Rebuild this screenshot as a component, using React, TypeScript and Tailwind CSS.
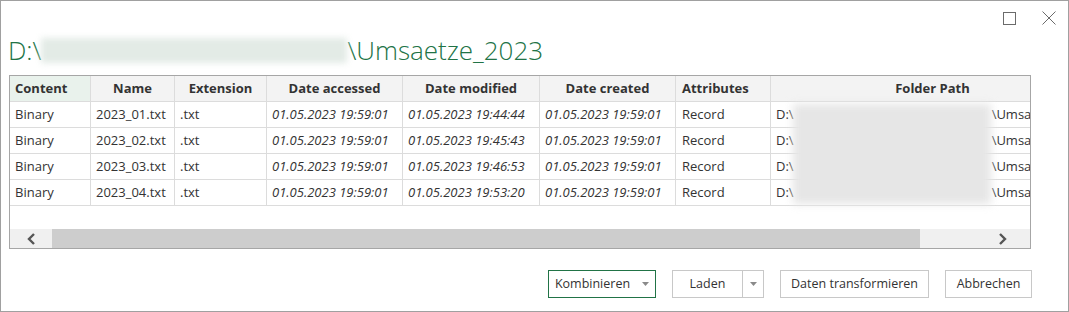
const rows = [
  { name: "2023_01.txt", modified: "01.05.2023 19:44:44" },
  { name: "2023_02.txt", modified: "01.05.2023 19:45:43" },
  { name: "2023_03.txt", modified: "01.05.2023 19:46:53" },
  { name: "2023_04.txt", modified: "01.05.2023 19:53:20" },
];

const cols = "grid grid-cols-[81px_84px_92px_136px_137px_136px_95px_1fr]";
const cell = "h-[26px] flex items-center border-r border-b border-[#dcdcdc] px-[5px] whitespace-nowrap overflow-hidden";
const head = "h-[26px] flex items-center justify-center border-r border-b border-[#dcdcdc] bg-[#f3f3f3] font-bold whitespace-nowrap";

const Caret = () => (
  <svg width="7" height="4" viewBox="0 0 7 4" className="fill-[#8a8a8a]">
    <path d="M0 0h7L3.5 4z" />
  </svg>
);

const App = () => {
  return (
    <div
      className="relative w-[1069px] h-[312px] border border-[#a0a0a0] bg-white text-[#333] text-[13px] overflow-hidden"
      style={{ fontFamily: '"Segoe UI", "Open Sans", sans-serif' }}
    >
      {/* window controls */}
      <div className="absolute top-[10px] right-[12px] flex items-center gap-[26px]">
        <div className="w-[13px] h-[13px] border border-[#6b6b6b]" />
        <svg width="14" height="14" viewBox="0 0 14 14" className="stroke-[#6b6b6b]">
          <path d="M0.5 0.5L13.5 13.5M13.5 0.5L0.5 13.5" strokeWidth="1" />
        </svg>
      </div>

      <div className="pt-[33px] pl-[7px] flex items-center text-[26px] font-light text-[#217346] leading-[32px]">
        <span>D:\</span>
        <div className="w-[306px] h-[25px] bg-[#e3ebe6] blur-[3px]" />
        <span>\Umsaetze_2023</span>
      </div>

      <div className="flex justify-center pl-[8px] pr-[37px] mt-[9px]">
        <div className="w-[1023px] h-[174px] border border-[#a6a6a6] flex flex-col">
          <div className="relative flex-1 overflow-hidden">
            <div className={cols}>
              <div className="h-[26px] flex items-center border-r border-b border-[#dcdcdc] bg-[#e9f2ec] font-bold pl-[5px]">Content</div>
              <div className={head}>Name</div>
              <div className={head}>Extension</div>
              <div className={head}>Date accessed</div>
              <div className={head}>Date modified</div>
              <div className={head}>Date created</div>
              <div className={`${head} justify-start pl-[6px]`}>Attributes</div>
              <div className={`${head} border-r-0 pl-[64px]`}>Folder Path</div>
              {rows.map((r) => (
                <div key={r.name} className="contents">
                  <div className={cell}>Binary</div>
                  <div className={cell}>{r.name}</div>
                  <div className={cell}>.txt</div>
                  <div className={`${cell} italic`}>01.05.2023 19:59:01</div>
                  <div className={`${cell} italic`}>{r.modified}</div>
                  <div className={`${cell} italic`}>01.05.2023 19:59:01</div>
                  <div className={`${cell} pl-[6px]`}>Record</div>
                  <div className={`${cell} border-r-0`}>
                    <span>D:\</span>
                    <span className="w-[198px] shrink-0" />
                    <span>\Umsaetze_2023\</span>
                  </div>
                </div>
              ))}
            </div>
            <div className="absolute left-[783px] top-[28px] w-[198px] h-[100px] bg-[#e6e6e6] blur-[4px]" />
          </div>
          <div className="h-[19px] flex bg-[#f0f0f0]">
            <div className="w-[42px] flex items-center justify-center">
              <svg width="9" height="12" viewBox="0 0 9 12">
                <path d="M7 1L2 6l5 5" fill="none" stroke="#555" strokeWidth="2.4" />
              </svg>
            </div>
            <div className="w-[868px] bg-[#cdcdcd]" />
            <div className="flex-1 flex items-center justify-end pr-[23px]">
              <svg width="9" height="12" viewBox="0 0 9 12">
                <path d="M2 1l5 5-5 5" fill="none" stroke="#555" strokeWidth="2.4" />
              </svg>
            </div>
          </div>
        </div>
      </div>

      <div className="flex justify-end gap-[16px] pr-[36px] mt-[21px] text-[12.5px]">
        <button className="w-[108px] h-[28px] border border-[#217346] flex items-center justify-center gap-[12px] text-[#333]">
          Kombinieren <Caret />
        </button>
        <div className="flex h-[28px] border border-[#c8c8c8]">
          <button className="w-[70px] flex items-center justify-center border-r border-[#c8c8c8]">Laden</button>
          <button className="w-[20px] flex items-center justify-center"><Caret /></button>
        </div>
        <button className="w-[149px] h-[28px] border border-[#c8c8c8]">Daten transformieren</button>
        <button className="w-[87px] h-[28px] border border-[#c8c8c8]">Abbrechen</button>
      </div>
    </div>
  );
};

export default App;
